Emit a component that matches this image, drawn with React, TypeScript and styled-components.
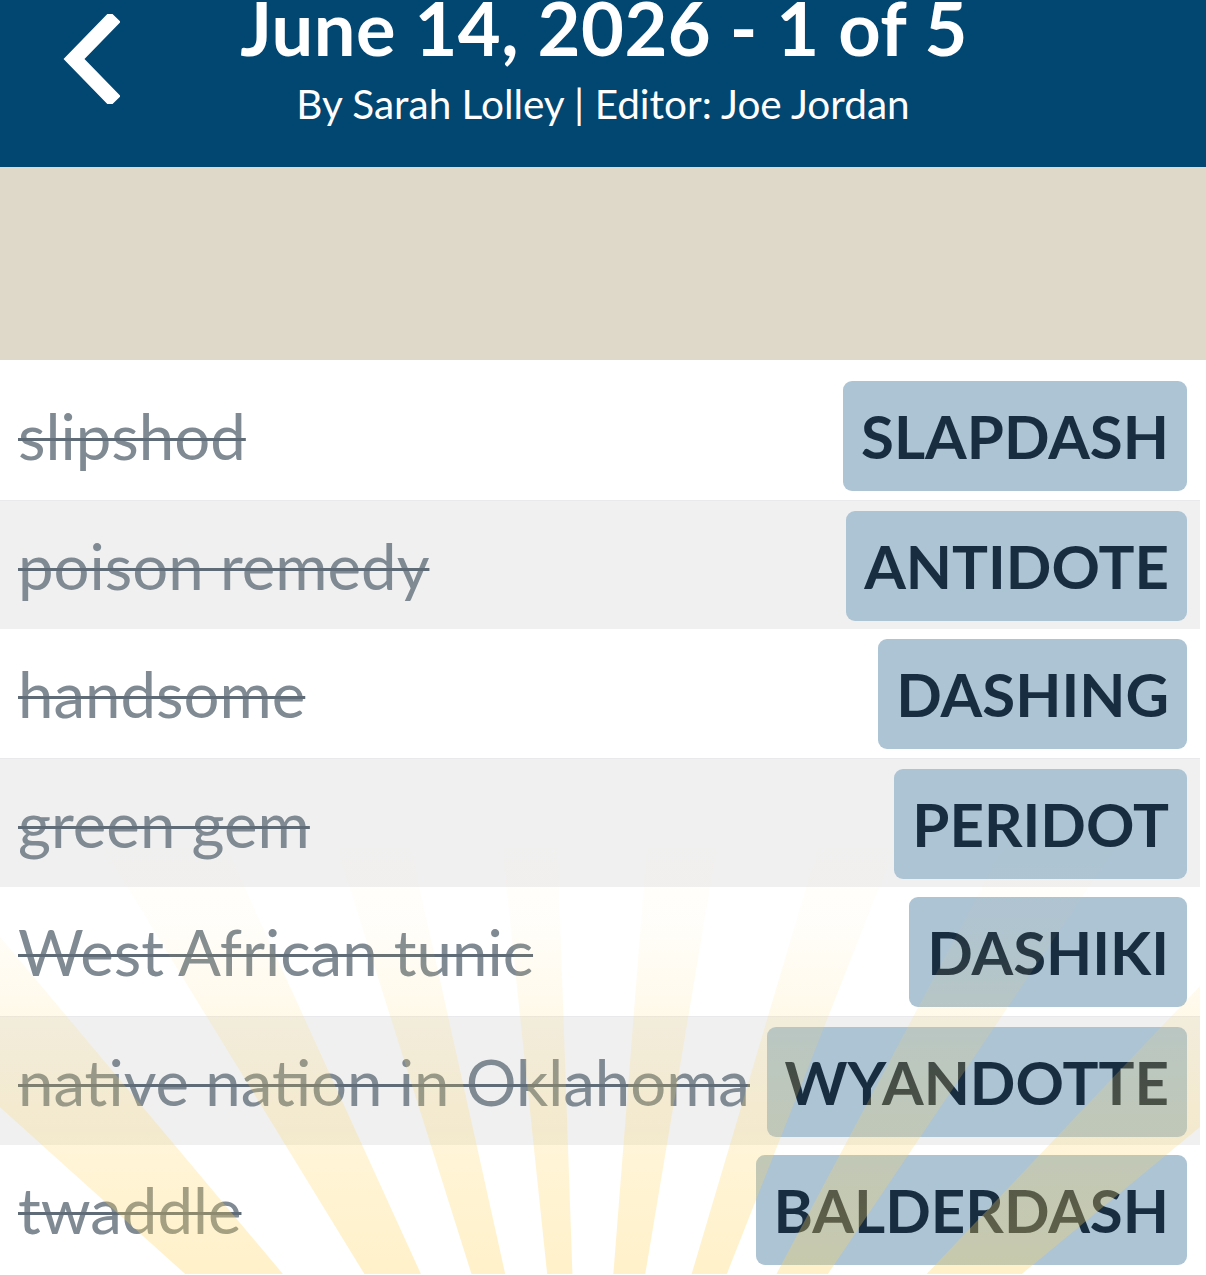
import React from 'react';
import styled, { createGlobalStyle } from 'styled-components';

type Entry = Readonly<{
    clue: string;
    answer: string;
}>;

const entries: Entry[] = [
    { clue: 'slipshod', answer: 'SLAPDASH' },
    { clue: 'poison remedy', answer: 'ANTIDOTE' },
    { clue: 'handsome', answer: 'DASHING' },
    { clue: 'green gem', answer: 'PERIDOT' },
    { clue: 'West African tunic', answer: 'DASHIKI' },
    { clue: 'native nation in Oklahoma', answer: 'WYANDOTTE' },
    { clue: 'twaddle', answer: 'BALDERDASH' },
];

// sunburst rays: angle from straight up and width, in degrees
const rays: [number, number][] = [
    [-44, 8],
    [-28, 7],
    [-15, 5],
    [-4, 4],
    [7, 5],
    [19, 5],
    [31, 6],
    [47, 7],
];

const BURST_H = 430;
const CX = 585;
const CY = BURST_H + 360;

const rayPoint = (deg: number, len: number) => {
    const r = (deg * Math.PI) / 180;
    return `${CX + Math.sin(r) * len},${CY - Math.cos(r) * len}`;
};

const App = () => (
    <>
        <GlobalStyle />
        <Page>
            <Header>
                <BackButton aria-label="Back">
                    <svg width="60" height="90" viewBox="0 0 60 90">
                        <path
                            d="M50 8 L14 45 L50 82"
                            fill="none"
                            stroke="#fff"
                            strokeWidth="15"
                            strokeLinecap="square"
                        />
                    </svg>
                </BackButton>
                <HeaderText>
                    <Title>June 14, 2026 - 1 of 5</Title>
                    <Byline>By Sarah Lolley | Editor: Joe Jordan</Byline>
                </HeaderText>
            </Header>
            <Band />
            <List>
                {entries.map(({ clue, answer }, i) => (
                    <Row key={answer} $shaded={i % 2 === 1} $first={i === 0}>
                        <Clue>{clue}</Clue>
                        <Answer>{answer}</Answer>
                    </Row>
                ))}
                <Burst viewBox={`0 0 1200 ${BURST_H}`}>
                    <defs>
                        <linearGradient
                            id="fade"
                            gradientUnits="userSpaceOnUse"
                            x1="0"
                            y1={BURST_H}
                            x2="0"
                            y2="0"
                        >
                            <stop offset="0" stopColor="#ffd45c" stopOpacity="0.33" />
                            <stop offset="0.5" stopColor="#ffd45c" stopOpacity="0.18" />
                            <stop offset="0.8" stopColor="#ffd45c" stopOpacity="0.04" />
                            <stop offset="1" stopColor="#ffd45c" stopOpacity="0" />
                        </linearGradient>
                    </defs>
                    {rays.map(([a, w]) => (
                        <polygon
                            key={a}
                            points={`${CX},${CY} ${rayPoint(a - w / 2, 1400)} ${rayPoint(a + w / 2, 1400)}`}
                            fill="url(#fade)"
                        />
                    ))}
                </Burst>
            </List>
        </Page>
    </>
);

const GlobalStyle = createGlobalStyle`
    html, body {
        margin: 0;
        padding: 0;
        background: #ffffff;
    }
    body {
        font-family: Lato, "Open Sans", sans-serif;
    }
`;

const Page = styled.div`
    width: 1206px;
    height: 1275px;
    overflow: hidden;
`;

const Header = styled.header`
    height: 167px;
    background: #024672;
    display: flex;
    align-items: flex-start;
    position: relative;
    color: #ffffff;
`;

const BackButton = styled.div`
    position: absolute;
    left: 60px;
    top: 14px;
    display: flex;
`;

const HeaderText = styled.div`
    flex: 1;
    display: flex;
    flex-direction: column;
    align-items: center;
    margin-top: -14px;
`;

const Title = styled.div`
    font-size: 74px;
    font-weight: 700;
    line-height: 84px;
    letter-spacing: 0.5px;
    margin-left: 2px;
`;

const Byline = styled.div`
    font-size: 40.5px;
    line-height: 48px;
    margin-top: 10px;
`;

const Band = styled.div`
    height: 193px;
    background: #dfd9c9;
`;

const List = styled.div`
    position: relative;
    margin-right: 6px;
    padding-top: 11px;
`;

const Row = styled.div<{ $shaded: boolean; $first: boolean }>`
    height: 129px;
    margin-top: ${({ $first }) => ($first ? '-11px' : '0')};
    padding-top: ${({ $first }) => ($first ? '11px' : '0')};
    display: flex;
    align-items: center;
    justify-content: space-between;
    padding-left: 18px;
    padding-right: 13px;
    background: ${({ $shaded }) => ($shaded ? '#f0f0f0' : '#ffffff')};
    border-top: ${({ $shaded }) => ($shaded ? '1px solid #e9e9eb' : 'none')};
    margin-bottom: ${({ $shaded }) => ($shaded ? '-1px' : '0')};
`;

const Clue = styled.div`
    font-size: 63.5px;
    color: #7f8a93;
    text-decoration: line-through;
    text-decoration-color: #5f6b76;
    text-decoration-thickness: 3px;
    white-space: nowrap;
`;

const Answer = styled.div`
    height: 110px;
    display: flex;
    align-items: center;
    padding: 0 18px;
    background: #adc4d4;
    border-radius: 9px;
    color: #192d41;
    font-size: 60px;
    font-weight: 700;
    white-space: nowrap;
`;

const Burst = styled.svg`
    position: absolute;
    left: 0;
    bottom: 0;
    width: 1200px;
    height: ${BURST_H}px;
    pointer-events: none;
`;

export default App;
